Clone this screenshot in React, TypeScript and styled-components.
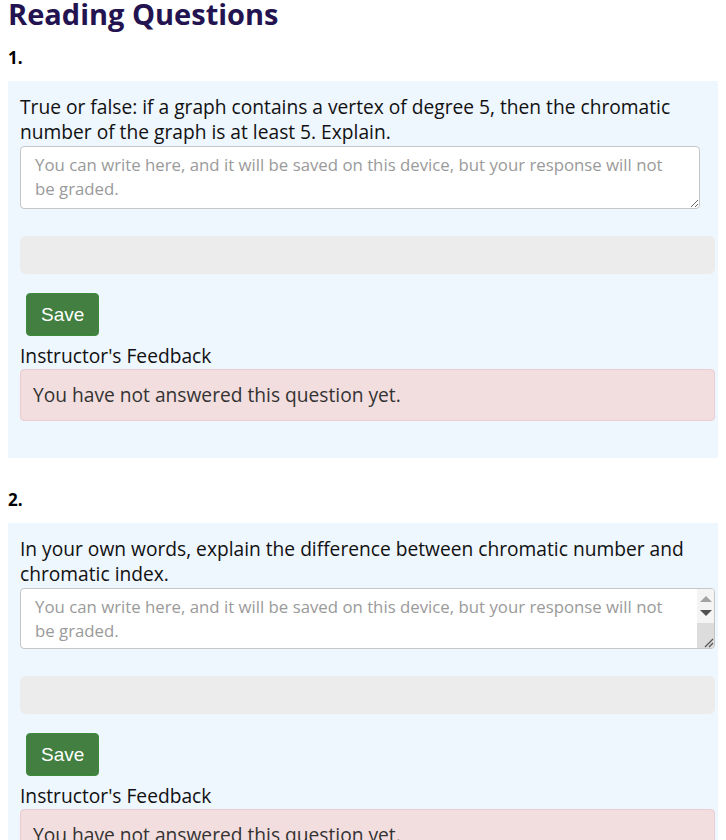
import React from "react";
import styled, { createGlobalStyle } from "styled-components";

const GlobalStyle = createGlobalStyle`
  html, body { margin: 0; padding: 0; background: #ffffff; }
  body { margin: 0 8px; font-family: "Open Sans", "DejaVu Sans", sans-serif; color: #111; overflow-x: hidden; }
  * { box-sizing: border-box; }
`;

const Page = styled.div`
  display: flex;
  flex-direction: column;
`;

const Title = styled.h1`
  margin: 0;
  font-size: 29px;
  line-height: 28px;
  font-weight: 700;
  color: #231350;
`;

const QuestionBlock = styled.section`
  display: flex;
  flex-direction: column;
  margin-bottom: 12px;
`;

const Number = styled.h3`
  margin: 19px 0 12px;
  font-size: 17px;
  line-height: 22px;
  font-weight: 700;
  color: #000;
`;

const Panel = styled.div`
  background: #eef6fe;
  margin-right: -9px;
  padding: 13px 12px 37px 12px;
  display: flex;
  flex-direction: column;
`;

const Prompt = styled.p`
  margin: 0 0 2px;
  font-size: 19.2px;
  line-height: 25px;
  color: #111;
`;

const AnswerWrap = styled.div<{ $scroll?: boolean }>`
  position: relative;
  width: ${(p) => (p.$scroll ? "100%" : "calc(100% - 15px)")};
`;

const Answer = styled.textarea<{ $scroll?: boolean }>`
  display: block;
  width: 100%;
  height: ${(p) => (p.$scroll ? "61px" : "63px")};
  margin: 0;
  padding: 6px ${(p) => (p.$scroll ? "36px" : "20px")} 6px 14px;
  border: 1px solid #c6c6c6;
  border-radius: 4px;
  background: #fff;
  font-family: "Open Sans", "DejaVu Sans", sans-serif;
  font-size: 16.8px;
  line-height: 24px;
  color: #333;
  resize: vertical;
  overflow: hidden;
  &::placeholder { color: #9a9a9a; }
`;

const FakeScroll = styled.div`
  position: absolute;
  top: 1px;
  right: 1px;
  bottom: 1px;
  width: 17px;
  display: flex;
  flex-direction: column;
  border-top-right-radius: 3px;
  border-bottom-right-radius: 3px;
  overflow: hidden;
  pointer-events: none;
`;

const ScrollButtons = styled.div`
  height: 34px;
  background: #f4f4f4;
  display: flex;
  flex-direction: column;
  align-items: center;
  justify-content: center;
  gap: 8px;
`;

const ArrowUp = styled.span`
  width: 0;
  height: 0;
  border-left: 6px solid transparent;
  border-right: 6px solid transparent;
  border-bottom: 6px solid #a3a3a3;
`;

const ArrowDown = styled.span`
  width: 0;
  height: 0;
  border-left: 6px solid transparent;
  border-right: 6px solid transparent;
  border-top: 6px solid #505050;
`;

const ScrollTrack = styled.div`
  flex: 1;
  background: #dcdcdc;
  display: flex;
  align-items: flex-end;
  justify-content: flex-end;
`;

const StatusBar = styled.div`
  margin-top: 27px;
  height: 38px;
  border-radius: 6px;
  background: #ececec;
`;

const ButtonRow = styled.div`
  display: flex;
  padding-left: 6px;
  margin-top: 19px;
`;

const SaveButton = styled.button`
  height: 43px;
  padding: 0 14px;
  border: 1px solid #3d8b3d;
  border-radius: 4px;
  background: #427f40;
  color: #fff;
  font-family: "Liberation Sans", Arial, sans-serif;
  font-size: 19px;
  cursor: pointer;
`;

const FeedbackLabel = styled.div`
  margin-top: 8px;
  font-size: 19.2px;
  line-height: 24px;
  color: #111;
`;

const FeedbackBox = styled.div`
  margin-top: 1px;
  padding: 12px 12px;
  border: 1px solid #ebccd1;
  border-radius: 4px;
  background: #f2dede;
  font-size: 19.2px;
  line-height: 26px;
  color: #333;
`;

const placeholder =
  "You can write here, and it will be saved on this device, but your response will not be graded.";

const questions = [
  {
    n: "1.",
    text: "True or false: if a graph contains a vertex of degree 5, then the chromatic number of the graph is at least 5. Explain.",
    scroll: false,
  },
  {
    n: "2.",
    text: "In your own words, explain the difference between chromatic number and chromatic index.",
    scroll: true,
  },
];

export default function App() {
  return (
    <Page>
      <GlobalStyle />
      <Title>Reading Questions</Title>
      {questions.map((q) => (
        <QuestionBlock key={q.n}>
          <Number>{q.n}</Number>
          <Panel>
            <Prompt>{q.text}</Prompt>
            <AnswerWrap $scroll={q.scroll}>
              <Answer $scroll={q.scroll} placeholder={placeholder} />
              {q.scroll && (
                <FakeScroll>
                  <ScrollButtons>
                    <ArrowUp />
                    <ArrowDown />
                  </ScrollButtons>
                  <ScrollTrack>
                    <svg width="12" height="12" viewBox="0 0 12 12">
                      <path d="M11 3 L3 11 M11 7 L7 11" stroke="#555" strokeWidth="1.2" />
                    </svg>
                  </ScrollTrack>
                </FakeScroll>
              )}
            </AnswerWrap>
            <StatusBar />
            <ButtonRow>
              <SaveButton>Save</SaveButton>
            </ButtonRow>
            <FeedbackLabel>Instructor's Feedback</FeedbackLabel>
            <FeedbackBox>You have not answered this question yet.</FeedbackBox>
          </Panel>
        </QuestionBlock>
      ))}
    </Page>
  );
}
